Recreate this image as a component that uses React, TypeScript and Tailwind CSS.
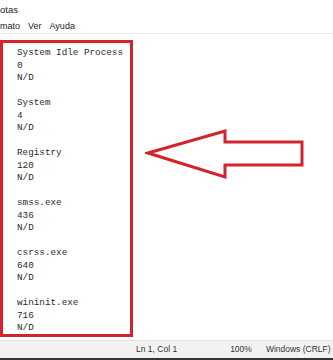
const procs = [
  { name: 'System Idle Process', pid: '0' },
  { name: 'System', pid: '4' },
  { name: 'Registry', pid: '120' },
  { name: 'smss.exe', pid: '436' },
  { name: 'csrss.exe', pid: '640' },
  { name: 'wininit.exe', pid: '716' },
];

export default function App() {
  return (
    <div className="w-[333px] h-[360px] bg-white flex flex-col overflow-hidden font-['Liberation_Sans',sans-serif] text-[#222]">
      {/* title + menu */}
      <div className="h-[20px] flex items-center text-[9.5px]">otas</div>
      <div className="h-[14px] flex items-center gap-[8px] text-[9px] border-b border-[#ececec] whitespace-nowrap">
        <span>mato</span>
        <span>Ver</span>
        <span>Ayuda</span>
      </div>

      {/* editor */}
      <div className="flex-1 flex items-start pt-[6px]">
        <div className="w-[133px] h-[297px] shrink-0 border-[3px] border-[#d3232b] pl-[14px] pt-[4px] font-['Liberation_Mono',monospace] text-[9.3px] leading-[12.5px] text-[#2b2b2b]">
          {procs.map((p) => (
            <div key={p.name} className="mb-[12.5px]">
              <div>{p.name}</div>
              <div>{p.pid}</div>
              <div>N/D</div>
            </div>
          ))}
        </div>
        <svg width="170" height="60" viewBox="0 0 170 60" className="mt-[89px] ml-[12px] shrink-0">
          <polygon
            points="2,22 79,0 79,11 156,11 156,34 79,34 79,46"
            fill="none"
            stroke="#d3232b"
            strokeWidth="3"
            transform="translate(1,2)"
          />
        </svg>
      </div>

      {/* status bar */}
      <div className="h-[18px] bg-[#f2f2f2] border-t border-[#e2e2e2] flex items-center text-[8.5px] text-[#333] whitespace-nowrap">
        <span className="ml-[136px]">Ln 1, Col 1</span>
        <span className="ml-[53px]">100%</span>
        <span className="ml-[14px]">Windows (CRLF)</span>
      </div>
      <div className="h-[2px] bg-[#333]" />
    </div>
  );
}
